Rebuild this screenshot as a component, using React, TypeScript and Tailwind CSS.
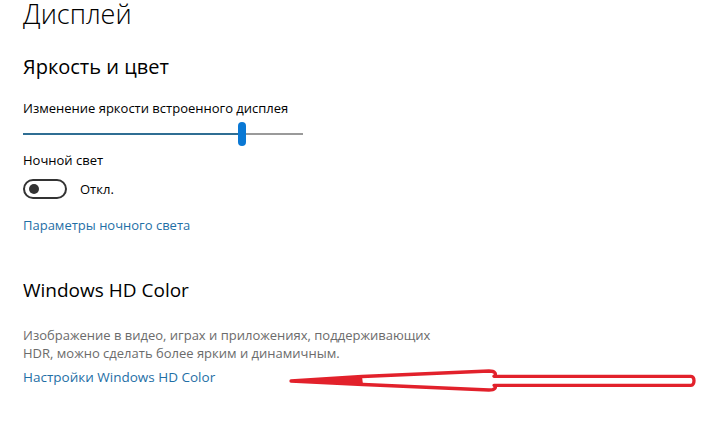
import React from "react";

export default function App() {
  const font = { fontFamily: '"Open Sans", "Noto Sans", sans-serif' };
  return (
    <div className="relative w-[704px] h-[421px] bg-white overflow-hidden" style={font}>
      <div className="flex flex-col pl-[23px] text-black">
        <div className="mt-[0px] text-[27px] leading-[28px] font-light text-black">Дисплей</div>
        <div className="mt-[25px] text-[20px] leading-[28px] font-normal">Яркость и цвет</div>
        <div className="mt-[17px] text-[13px] leading-[20px]">Изменение яркости встроенного дисплея</div>
        <div className="mt-[4px] relative h-[24px] w-[280px] flex items-center">
          <div className="h-[2px] w-[215px] bg-[#2f6e93]" />
          <div className="h-[24px] w-[8px] rounded-full bg-[#0a78d4]" />
          <div className="h-[2px] flex-1 bg-[#9a9a9a]" />
        </div>
        <div className="mt-[4px] text-[13px] leading-[20px]">Ночной свет</div>
        <div className="mt-[9px] flex items-center h-[20px]">
          <div className="w-[44px] h-[20px] rounded-full border-2 border-[#333] flex items-center pl-[4px]">
            <div className="w-[10px] h-[10px] rounded-full bg-[#333]" />
          </div>
          <span className="ml-[13px] text-[13px] leading-[20px]">Откл.</span>
        </div>
        <div className="mt-[16px] text-[13px] leading-[20px] text-[#1f6fa6]">Параметры ночного света</div>
        <div className="mt-[41px] text-[19px] leading-[28px]">Windows HD Color</div>
        <div className="mt-[22px] text-[13px] leading-[18px] text-[#6b6b6b] w-[440px]">
          Изображение в видео, играх и приложениях, поддерживающих
          <br />
          HDR, можно сделать более ярким и динамичным.
        </div>
        <div className="mt-[5px] text-[13.5px] leading-[20px] text-[#1f6fa6]">Настройки Windows HD Color</div>
      </div>
      <svg className="absolute left-0 top-0" width="704" height="421" viewBox="0 0 704 421">
        <path d="M291 381 L362 376.5 L363 384.5 Z" fill="#e2212b" />
        <path
          d="M291 381 L362 376.5 L489 371 C495 371, 497 374, 494 376.3 L691 376.3 C695 376.3, 695 385.3, 691 385.3 L494 385.3 C497 387, 495 390, 489 390 L363 384.5 Z"
          fill="none"
          stroke="#e2212b"
          strokeWidth="3.3"
          strokeLinejoin="round"
        />
      </svg>
    </div>
  );
}
